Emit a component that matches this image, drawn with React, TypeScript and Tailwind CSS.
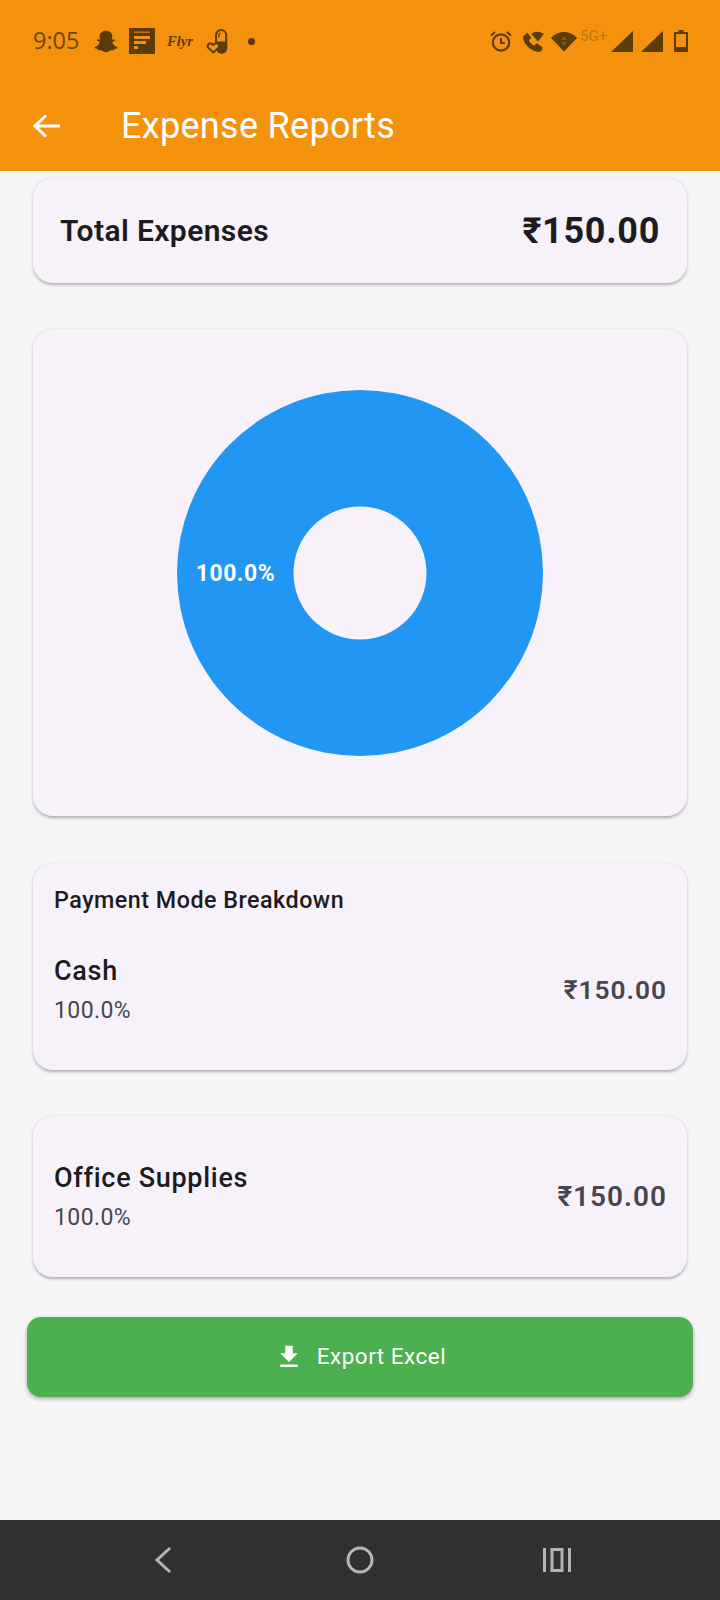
import { FaSnapchatGhost } from "react-icons/fa";

const INK = "#5b3b07";
const BAR = "#f4920d";

function StatusBar() {
  return (
    <div className="flex items-center justify-between h-[82px] pl-[33px] pr-[32px] text-[#5b3b07]">
      <div className="flex items-center">
        <span className="w-[47px] text-[23.500px] leading-none font-['Open_Sans',sans-serif] text-[#6a4508]">9:05</span>
        <FaSnapchatGhost className="ml-[14px] w-[24px] h-[23px]" />
        <svg viewBox="0 0 26 26" className="ml-[11px] w-[26px] h-[26px]">
          <rect width="26" height="26" fill={INK} />
          <rect x="5" y="3.500" width="16" height="1.400" fill={BAR} opacity="0.7" />
          <rect x="5" y="8" width="16" height="3" fill={BAR} />
          <rect x="5" y="13" width="12" height="3" fill={BAR} />
          <rect x="5" y="18" width="4" height="3" fill={BAR} />
        </svg>
        <span className="ml-[12px] w-[26px] text-[14.500px] leading-none italic font-semibold font-['Liberation_Serif',serif]">Flyr</span>
        <svg viewBox="0 0 24 26" fill="none" stroke={INK} strokeWidth="2.200" className="ml-[13px] w-[22px] h-[25px]">
          <path d="M11 15V6a5.500 5.500 0 0 1 11 0v14a5 5 0 0 1-9 3" />
          <path d="M11 14h11v6a5 5 0 0 1-9 3z" fill={INK} />
          <path d="M16 3.500c-1.500.5-2 1.500-2 3v2" strokeWidth="1.400" />
          <path d="M8 25 2.600 20a3 3 0 0 1 4-4.400L8 16.800l1.400-1.200a3 3 0 0 1 4 4.400z" fill={BAR} />
        </svg>
        <span className="ml-[20px] w-[7px] h-[7px] rounded-full bg-[#5b3b07]" />
      </div>
      <div className="flex items-center">
        <svg viewBox="0 0 22 22" fill="none" stroke={INK} strokeWidth="2.200" className="w-[22px] h-[22px]">
          <circle cx="11" cy="12.500" r="8.200" />
          <path d="M11 8v5h3.800" strokeWidth="2" />
          <path d="M1 5.500 5 2M21 5.500 17 2" strokeWidth="2" />
        </svg>
        <svg viewBox="0 0 24 24" className="ml-[10px] w-[22px] h-[23px]" fill={INK}>
          <path d="M1 6.500 6 2.500 10 8 7.500 10.500C8.500 13 11 15.500 13.500 16.500L16 14 22 18 22 21 19.500 23.500C9 23 1 14 1 6.500z" />
          <path d="M10 3.500C14 .5 19 .5 24 3.500L17.500 12z" />
        </svg>
        <svg viewBox="0 0 26 20" className="ml-[7px] w-[26px] h-[21px]">
          <path d="M0 6.500C3 3 8 .5 13 .5s10 2.500 13 6L13 20z" fill={INK} />
          <path d="M13 4.500 16 8.500H10zM13 14.500 16 10.500H10z" fill="#8a5a0c" />
        </svg>
        <span className="mb-[10px] ml-[3px] w-[31px] text-[15px] leading-none text-[#b97a10]">5G+</span>
        <svg viewBox="0 0 22 21" className="w-[22px] h-[21px]"><path d="M0 21 22 0v21z" fill={INK} /></svg>
        <svg viewBox="0 0 22 21" className="ml-[8px] w-[22px] h-[21px]"><path d="M0 21 22 0v21z" fill={INK} /></svg>
        <svg viewBox="0 0 14 22" className="ml-[11px] w-[14px] h-[22px]">
          <path d="M4.500 0h5v2H13a1 1 0 0 1 1 1v18a1 1 0 0 1-1 1H1a1 1 0 0 1-1-1V3a1 1 0 0 1 1-1h3.500z" fill={INK} />
          <rect x="2" y="4" width="10" height="13" fill={BAR} />
        </svg>
      </div>
    </div>
  );
}

function Row({ name, amount, amountSize, className }: { name: string; amount: string; amountSize: string; className: string }) {
  return (
    <div className={`flex items-center justify-between ${className}`}>
      <div>
        <p className="text-[27px] leading-[30px] font-medium tracking-[0.7px] text-[#1d1b20]">{name}</p>
        <p className="mt-[12px] text-[23px] leading-[26px] tracking-[0.4px] text-[#49454f]">100.0%</p>
      </div>
      <p className={`${amountSize} leading-[30px] font-semibold tracking-[1px] text-[#49454f]`}>{amount}</p>
    </div>
  );
}

const CARD = "mx-[33px] bg-[#f7f2fa] rounded-[20px] shadow-[0_1.500px_3px_rgba(0,0,0,0.28)]";

export default function App() {
  return (
    <div className="w-[720px] h-[1600px] flex flex-col bg-[#f5f5f5] font-['Roboto',sans-serif]">
      <header className="h-[171px] bg-[#f4920d] shrink-0">
        <StatusBar />
        <div className="flex items-center h-[88px] pl-[33px]">
          <svg viewBox="0 0 28 24" fill="none" stroke="white" strokeWidth="3" className="w-[28px] h-[24px]">
            <path d="M27 12H2M13 1.500 2 12l11 10.500" />
          </svg>
          <h1 className="ml-[60px] text-[36px] leading-none text-white tracking-[0.3px]">Expense Reports</h1>
        </div>
      </header>

      <main className="flex-1 flex flex-col">
        <section className={`${CARD} mt-[7px] h-[105px] flex items-center justify-between pl-[27px] pr-[27px]`}>
          <p className="text-[30px] font-semibold tracking-[0.4px] text-[#1d1b20]">Total Expenses</p>
          <p className="text-[36px] font-bold tracking-[0.7px] text-[#1d1b20]">₹150.00</p>
        </section>

        <section className={`${CARD} mt-[46px] h-[487px] flex items-center justify-center`}>
          <svg viewBox="0 0 366 366" className="w-[366px] h-[366px]">
            <path
              fillRule="evenodd"
              fill="#2196f3"
              d="M183 0a183 183 0 1 0 0 366a183 183 0 1 0 0-366zM183 116.500a66.500 66.500 0 1 1 0 133a66.500 66.500 0 1 1 0-133z"
            />
            <text x="58.500" y="190.500" textAnchor="middle" fill="white" fontFamily="Roboto, sans-serif" fontWeight="700" fontSize="23" letterSpacing="0.5">100.0%</text>
          </svg>
        </section>

        <section className={`${CARD} mt-[47px] h-[207px] pt-[23px]`}>
          <h2 className="px-[21px] text-[23.300px] leading-[28px] font-medium tracking-[0.5px] text-[#1d1b20]">Payment Mode Breakdown</h2>
          <Row name="Cash" amount="₹150.00" amountSize="text-[26.300px]" className="mt-[42px] pl-[21px] pr-[20px]" />
        </section>

        <section className={`${CARD} mt-[46px] h-[161px] pt-[47px]`}>
          <Row name="Office Supplies" amount="₹150.00" amountSize="text-[28px]" className="pl-[21px] pr-[20px]" />
        </section>

        <button className="mx-[27px] mt-[40px] h-[80px] flex items-center justify-center bg-[#4caf50] rounded-[14px] shadow-[0_2px_4px_rgba(0,0,0,0.3)] text-white">
          <svg viewBox="0 0 24 24" fill="white" className="w-[30px] h-[30px]">
            <path d="M19 9h-4V3H9v6H5l7 7 7-7zM5 18v2h14v-2H5z" />
          </svg>
          <span className="ml-[13px] text-[22.500px] font-normal tracking-[0.5px]">Export Excel</span>
        </button>
      </main>

      <nav className="h-[80px] shrink-0 bg-[#313131] flex items-center justify-center pl-[4px]">
        <svg viewBox="0 0 20 28" fill="none" stroke="#b4b4b4" strokeWidth="3" className="w-[20px] h-[28px]">
          <path d="M17 2 4 14l13 12" />
        </svg>
        <svg viewBox="0 0 28 28" fill="none" stroke="#b4b4b4" strokeWidth="3" className="ml-[173px] w-[28px] h-[28px]">
          <circle cx="14" cy="14" r="12" />
        </svg>
        <svg viewBox="0 0 28 24" fill="none" stroke="#b4b4b4" strokeWidth="3" className="ml-[169px] w-[28px] h-[24px]">
          <path d="M1.500 0v24M26.500 0v24M9 1.500h10v21H9z" />
        </svg>
      </nav>
    </div>
  );
}
